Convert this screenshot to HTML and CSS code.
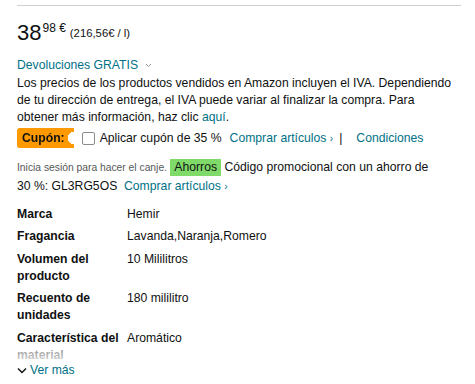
FILE: index.html
```html
<!DOCTYPE html>
<html>
<head>
  <title>Detalle de producto</title>
  <link rel="stylesheet" href="styles.css">
</head>
<body>
  <div class="buybox">
    <div class="top-rule"></div>

    <div class="price">
      <span class="price-whole">38</span>
      <span class="price-fraction">98 €</span>
      <span class="price-unit">(216,56€ / l)</span>
    </div>

    <div class="returns">
      <a class="link" href="#">Devoluciones GRATIS</a>
      <svg class="caret" width="7" height="5" viewBox="0 0 7 5"><polyline points="1,1 3.5,3.5 6,1" fill="none" stroke="#8a8f8f" stroke-width="1"/></svg>
    </div>

    <p class="vat">Los precios de los productos vendidos en Amazon incluyen el IVA. Dependiendo de tu dirección de entrega, el IVA puede variar al finalizar la compra. Para<br>obtener más información, haz clic <a class="link" href="#">aquí</a>.</p>

    <div class="coupon">
      <span class="coupon-badge">Cupón:</span>
      <span class="checkbox"></span>
      <span class="coupon-text">Aplicar cupón de 35 %</span>
      <a class="link" href="#">Comprar artículos <span class="chev">›</span></a>
      <span class="sep">|</span>
      <a class="link" href="#">Condiciones</a>
    </div>

    <p class="promo"><span class="muted">Inicia sesión para hacer el canje.</span> <span class="savings">Ahorros</span> Código promocional con un ahorro de 30&nbsp;%: GL3RG5OS &nbsp;<a class="link" href="#">Comprar artículos <span class="chev">›</span></a></p>

    <div class="specs">
      <table class="spec-table">
        <tr><td class="spec-label">Marca</td><td>Hemir</td></tr>
        <tr><td class="spec-label">Fragancia</td><td>Lavanda,Naranja,Romero</td></tr>
        <tr><td class="spec-label">Volumen del producto</td><td>10 Mililitros</td></tr>
        <tr><td class="spec-label">Recuento de unidades</td><td>180 mililitro</td></tr>
        <tr><td class="spec-label">Característica del material</td><td>Aromático</td></tr>
      </table>
    </div>

    <a class="see-more" href="#">
      <svg width="10" height="7" viewBox="0 0 10 7"><polyline points="1,1.5 5,5.5 9,1.5" fill="none" stroke="#0f1111" stroke-width="1.4"/></svg>
      <span class="link">Ver más</span>
    </a>
  </div>
</body>
</html>
```

FILE: styles.css
```css
body {
  margin: 0;
  background-color: #fff;
  font-family: "Liberation Sans", Arial, sans-serif;
  font-size: 12.2px;
  line-height: 17px;
  color: #0f1111;
}

.buybox {
  padding: 5px 14px 0 17px;
}

.top-rule {
  border-top: 1.5px solid #cfd2d2;
}

.link {
  color: #007185;
  text-decoration: none;
}

/* price */
.price {
  display: flex;
  align-items: flex-start;
  margin-top: 16px;
  height: 22px;
}

.price-whole {
  font-size: 22px;
  line-height: 22px;
}

.price-fraction {
  font-size: 12px;
  line-height: 12px;
  margin-left: 1px;
}

.price-unit {
  font-size: 11.3px;
  line-height: 12px;
  margin-left: 4px;
  margin-top: 5px;
}

.returns {
  margin-top: 13px;
  display: flex;
  align-items: center;
  gap: 7px;
}

.vat {
  margin: 1px 0 0 0;
}

/* coupon */
.coupon {
  display: flex;
  align-items: center;
  margin-top: 2px;
  height: 20px;
}

.coupon-badge {
  background-color: #ff9900;
  font-weight: bold;
  height: 20px;
  line-height: 20px;
  padding: 0 9px 0 5px;
  border-radius: 2px 0 0 2px;
  -webkit-mask-image: radial-gradient(circle at 100% 50%, transparent 6px, #000 6.5px);
  mask-image: radial-gradient(circle at 100% 50%, transparent 6px, #000 6.5px);
}

.checkbox {
  width: 11px;
  height: 11px;
  border: 1px solid #888c8c;
  border-radius: 2px;
  margin: 0 5px 0 8px;
}

.coupon-text {
  margin-right: 8px;
}

.chev {
  font-size: 10px;
}

.sep {
  margin: 0 14px 0 6px;
}

/* promo */
.promo {
  margin: 9.5px 0 0 0;
  line-height: 18.5px;
}

.muted {
  color: #565959;
  font-size: 10.3px;
}

.savings {
  display: inline-block;
  background-color: #7fda69;
  padding: 0 4px;
  line-height: 17px;
}

/* specs */
.specs {
  position: relative;
  margin-top: 6px;
  max-height: 159px;
  overflow: hidden;
}

.specs::after {
  content: "";
  position: absolute;
  left: 0;
  right: 0;
  bottom: 0;
  height: 18px;
  background: linear-gradient(to bottom, rgba(255, 255, 255, 0.45), rgba(255, 255, 255, 0.85));
}

.spec-table {
  border-collapse: collapse;
}

.spec-table td {
  padding: 3px 0 2.5px 0;
  vertical-align: top;
  line-height: 17px;
}

.spec-label {
  width: 104px;
  padding-right: 6px !important;
  font-weight: bold;
}

.see-more {
  display: flex;
  align-items: center;
  gap: 3px;
  text-decoration: none;
}
```
